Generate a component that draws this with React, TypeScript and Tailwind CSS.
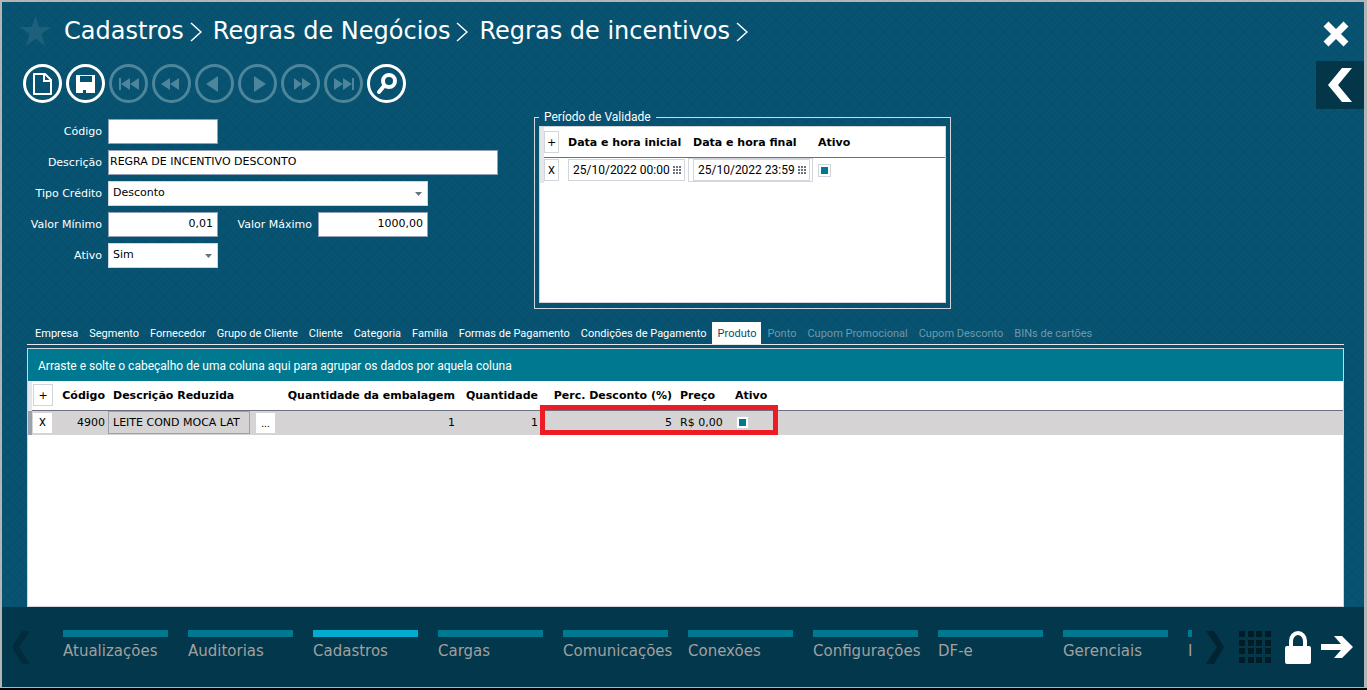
import { useState } from "react";
import type { ReactNode } from "react";

const verdana = "font-['DejaVu_Sans',Verdana,sans-serif]";
const segoe = "font-['Roboto','Segoe_UI',sans-serif]";

const crumbs = ["Cadastros", "Regras de Negócios", "Regras de incentivos"];

const tabs = [
  { label: "Empresa" },
  { label: "Segmento" },
  { label: "Fornecedor" },
  { label: "Grupo de Cliente" },
  { label: "Cliente" },
  { label: "Categoria" },
  { label: "Família" },
  { label: "Formas de Pagamento" },
  { label: "Condições de Pagamento" },
  { label: "Produto" },
  { label: "Ponto", disabled: true },
  { label: "Cupom Promocional", disabled: true },
  { label: "Cupom Desconto", disabled: true },
  { label: "BINs de cartões", disabled: true },
];

const modules = [
  "Atualizações",
  "Auditorias",
  "Cadastros",
  "Cargas",
  "Comunicações",
  "Conexões",
  "Configurações",
  "DF-e",
  "Gerenciais",
  "I",
];

const toolbar: { name: string; enabled?: boolean; icon: ReactNode }[] = [
  {
    name: "Novo",
    enabled: true,
    icon: (
      <>
        <path d="M11 10h11l6 6v14H11z" fill="none" stroke="currentColor" strokeWidth="2" strokeLinejoin="round" />
        <path d="M21 10v7h7" fill="none" stroke="currentColor" strokeWidth="2" />
      </>
    ),
  },
  {
    name: "Salvar",
    enabled: true,
    icon: <path fillRule="evenodd" d="M10 11h19v18H10zM14 12v6h12v-6zM17 26h3v3h-3z" />,
  },
  { name: "Primeiro", icon: <path d="M10 14h2v12h-2zM21 14v12l-9-6zM30 14v12l-9-6z" /> },
  { name: "Voltar página", icon: <path d="M18 14v12l-9-6zM27 14v12l-9-6z" /> },
  { name: "Anterior", icon: <path d="M23 12v16l-12-8z" /> },
  { name: "Próximo", icon: <path d="M16 12v16l12-8z" /> },
  { name: "Avançar página", icon: <path d="M13 14v12l8-6zM21 14v12l9-6z" /> },
  { name: "Último", icon: <path d="M10 14v12l9-6zM19 14v12l9-6zM28 14h2v12h-2z" /> },
  {
    name: "Pesquisar",
    enabled: true,
    icon: (
      <>
        <circle cx="22" cy="17" r="6" fill="none" stroke="currentColor" strokeWidth="4" />
        <path d="M17 22l-5 6" stroke="currentColor" strokeWidth="4" strokeLinecap="round" />
      </>
    ),
  },
];

function TextField({ id, label, value, className = "" }: { id: string; label: string; value: string; className?: string }) {
  return (
    <>
      <label htmlFor={id} className="w-24 shrink-0 pt-0.5 pr-1.5 text-right text-white">
        {label}
      </label>
      <input id={id} defaultValue={value} className={`h-[25px] border border-slate-400 bg-white pb-0.5 text-black ${className}`} />
    </>
  );
}

function SelectField({ id, label, value, className = "" }: { id: string; label: string; value: string; className?: string }) {
  return (
    <>
      <label htmlFor={id} className="w-24 shrink-0 pt-0.5 pr-1.5 text-right text-white">
        {label}
      </label>
      <div className={`relative ${className}`}>
        <select id={id} className="block h-[25px] w-full appearance-none border border-gray-300 bg-white pl-1 text-black">
          <option>{value}</option>
        </select>
        <svg viewBox="0 0 7 4" className="pointer-events-none absolute top-[11px] right-1.5 h-1 w-[7px] fill-gray-500">
          <path d="M0 0h7L3.500 4z" />
        </svg>
      </div>
    </>
  );
}

function DateCell({ label, value }: { label: string; value: string }) {
  return (
    <div className={`flex h-[22px] w-[117px] items-center border border-gray-300 bg-white pr-[3px] pl-1 ${segoe}`}>
      <input aria-label={label} defaultValue={value} className="w-full min-w-0 text-xs" />
      <svg viewBox="0 0 8 8" className="size-2 shrink-0 fill-gray-500">
        <path d="M0 0h2v2H0zM3 0h2v2H3zM6 0h2v2H6zM0 3h2v2H0zM3 3h2v2H3zM6 3h2v2H6zM0 6h2v2H0zM3 6h2v2H3zM6 6h2v2H6z" />
      </svg>
    </div>
  );
}

function Tick({ label }: { label: string }) {
  return (
    <input
      type="checkbox"
      aria-label={label}
      defaultChecked
      className="block size-[13px] appearance-none border border-gray-300 bg-white p-0.5 checked:bg-[linear-gradient(#00788f,#00788f)] checked:bg-origin-content checked:bg-no-repeat"
    />
  );
}

const smallButton = "block border border-gray-300 bg-white pt-0.5 text-center font-normal text-black";

export default function App() {
  const [tab, setTab] = useState("Produto");
  const [module, setModule] = useState("Cadastros");

  return (
    <div className={`flex min-h-screen flex-col overflow-hidden bg-black pb-0.5 text-[11px] ${verdana}`}>
      <div className="relative flex flex-1 flex-col border-2 border-r-[3px] border-b border-[#b5b5b5] bg-[#075371]">
        <svg className="pointer-events-none absolute inset-0 h-full w-full" aria-hidden="true">
          <defs>
            <pattern id="weave" width="12" height="12" patternUnits="userSpaceOnUse">
              <path d="M0 0l12 12M12 0L0 12" stroke="#04465f" strokeOpacity="0.45" />
            </pattern>
          </defs>
          <rect width="100%" height="100%" fill="url(#weave)" />
        </svg>

        <header className="relative flex items-start justify-between">
          <div className="pl-[18px]">
            <div className="flex h-[58px] items-center">
              <button aria-label="Favorito" className="mr-[13px]">
                <svg viewBox="0 0 31 30" className="h-[30px] w-[31px] fill-[#1c607c]">
                  <path d="M15.500 0l3.700 11H31l-9.500 7 3.600 12-9.600-7.200L5.900 30l3.600-12L0 11h11.800z" />
                </svg>
              </button>
              <nav className="flex items-center gap-[11px] text-2xl text-white">
                {crumbs.map((c) => (
                  <a key={c} href="#" className="flex items-center gap-1.5">
                    {c}
                    <svg viewBox="0 0 12 20" className="mt-0.5 h-5 w-3 fill-none stroke-white">
                      <path d="M1 1l10 9L1 19" strokeWidth="1.500" />
                    </svg>
                  </a>
                ))}
              </nav>
            </div>
            <div className="flex gap-1 pt-1 pl-[3px]">
              {toolbar.map((t) => (
                <button key={t.name} aria-label={t.name} disabled={!t.enabled} className="text-white disabled:text-[#4d859b]">
                  <svg viewBox="0 0 39 39" className="size-[39px] fill-current">
                    <circle cx="19.500" cy="19.500" r="18" fill="none" stroke="currentColor" strokeWidth="3" />
                    {t.icon}
                  </svg>
                </button>
              ))}
            </div>
          </div>
          <div className="flex flex-col items-end">
            <button aria-label="Fechar" className="mt-[19px] mr-[15px]">
              <svg viewBox="0 0 26 26" className="size-[26px] stroke-white">
                <path d="M3 3l20 20M23 3L3 23" strokeWidth="7" />
              </svg>
            </button>
            <button aria-label="Abrir painel" className="mt-[14px] flex h-12 w-12 items-center justify-center bg-[#04364a]">
              <svg viewBox="0 0 24 34" className="h-[34px] w-6 fill-white">
                <path d="M14 0h10L10 17l14 17H14L0 17z" />
              </svg>
            </button>
          </div>
        </header>

        <div className="relative flex pl-2.5">
          <form className="flex w-[522px] shrink-0 flex-col gap-1.5 pt-2.5">
            <div className="flex items-center">
              <TextField id="codigo" label="Código" value="" className="w-[110px] px-1" />
            </div>
            <div className="flex items-center">
              <TextField id="descricao" label="Descrição" value="REGRA DE INCENTIVO DESCONTO" className="w-[390px] px-px" />
            </div>
            <div className="flex items-center">
              <SelectField id="tipo" label="Tipo Crédito" value="Desconto" className="w-80" />
            </div>
            <div className="flex items-center">
              <TextField id="minimo" label="Valor Mínimo" value="0,01" className="w-[110px] px-1 text-right" />
              <div className="w-1" />
              <TextField id="maximo" label="Valor Máximo" value="1000,00" className="w-[110px] px-1 text-right" />
            </div>
            <div className="flex items-center">
              <SelectField id="ativo" label="Ativo" value="Sim" className="w-[110px]" />
            </div>
          </form>

          <fieldset className={`h-[200px] w-[417px] border border-gray-300 px-1 pb-[5px] ${segoe}`}>
            <legend className="px-[5px] text-xs leading-[17px] text-white">Período de Validade</legend>
            <div className={`h-full border border-gray-300 bg-white ${verdana}`}>
              <table className="w-full table-fixed border-l border-gray-500 text-left text-black">
                <thead>
                  <tr className="h-[30px] border-b border-gray-500">
                    <th className="w-[26px] border-l-4 border-gray-200">
                      <button aria-label="Adicionar período" className={`${smallButton} h-[22px] w-[15px]`}>+</button>
                    </th>
                    <th className="w-[125px] pt-0.5">Data e hora inicial</th>
                    <th className="w-[125px] pt-0.5">Data e hora final</th>
                    <th className="pt-0.5">Ativo</th>
                  </tr>
                </thead>
                <tbody>
                  <tr className="h-[26px]">
                    <td className="border-l-4 border-gray-200">
                      <button aria-label="Remover período" className={`${smallButton} h-[22px] w-[15px] ${segoe}`}>X</button>
                    </td>
                    <td><DateCell label="Data e hora inicial" value="25/10/2022 00:00" /></td>
                    <td>
                      <div className="-ml-[5px] w-[125px] border border-gray-300 pl-1">
                        <DateCell label="Data e hora final" value="25/10/2022 23:59" />
                      </div>
                    </td>
                    <td><Tick label="Período ativo" /></td>
                  </tr>
                </tbody>
              </table>
            </div>
          </fieldset>
        </div>

        <div className="relative mr-5 ml-[25px] flex flex-1 flex-col pt-[13px]">
          <div role="tablist" className={`flex h-[23px] border-b border-gray-200 pl-0.5 ${segoe}`}>
            {tabs.map((t) => (
              <button
                key={t.label}
                role="tab"
                aria-selected={tab === t.label}
                disabled={t.disabled}
                onClick={() => setTab(t.label)}
                className="pt-0.5 pr-[5px] pl-1.5 text-[11px] whitespace-nowrap text-white disabled:text-[#7097a8] aria-selected:bg-white aria-selected:text-[#06506e]"
              >
                {t.label}
              </button>
            ))}
          </div>

          <section className="mt-[3px] flex-1 border border-gray-300 bg-white">
            <p className={`flex h-8 items-center bg-[#00788f] pt-0.5 pl-2.5 text-xs text-white ${segoe}`}>
              Arraste e solte o cabeçalho de uma coluna aqui para agrupar os dados por aquela coluna
            </p>
            <div className="relative">
              <table className="w-full table-fixed text-left text-black">
                <thead>
                  <tr className="h-[29px] border-b border-gray-500">
                    <th className="w-[30px] border-l-4 border-gray-200">
                      <button aria-label="Adicionar produto" className={`${smallButton} ml-px h-[22px] w-5`}>+</button>
                    </th>
                    <th className="w-[45px] pt-0.5 text-right whitespace-nowrap">Código</th>
                    <th className="w-[172px] pt-0.5 pl-2">Descrição Reduzida</th>
                    <th className="w-[178px] pt-0.5 text-right whitespace-nowrap">Quantidade da embalagem</th>
                    <th className="w-[83px] pt-0.5 text-right whitespace-nowrap">Quantidade</th>
                    <th className="w-[134px] pt-0.5 text-right whitespace-nowrap">Perc. Desconto (%)</th>
                    <th className="w-[63px] pt-0.5 pl-2">Preço</th>
                    <th className="pt-0.5">Ativo</th>
                  </tr>
                </thead>
                <tbody>
                  <tr className="h-[25px] bg-[#d5d3d3]">
                    <td className="border-l-4 border-gray-400">
                      <button aria-label="Remover produto" className={`ml-px block h-5 w-[19px] bg-white ${segoe}`}>X</button>
                    </td>
                    <td className="text-right">4900</td>
                    <td className="pl-[3px]">
                      <div className="flex items-center gap-1.5">
                        <input aria-label="Descrição Reduzida" defaultValue="LEITE COND MOCA LAT" className="h-[23px] w-[142px] shrink-0 border border-gray-400 px-1" />
                        <button aria-label="Selecionar produto" className={`h-5 w-[19px] shrink-0 bg-white pt-0.5 ${segoe}`}>...</button>
                      </div>
                    </td>
                    <td className="text-right">1</td>
                    <td className="text-right">1</td>
                    <td className="text-right">5</td>
                    <td className="pl-2 whitespace-nowrap">R$ 0,00</td>
                    <td className="pl-px"><Tick label="Produto ativo" /></td>
                  </tr>
                </tbody>
              </table>
              <div className="pointer-events-none absolute top-6 left-[512px] h-[30px] w-[238px] border-5 border-[#ed1c24]" />
            </div>
          </section>
        </div>

        <footer className="relative flex h-20 items-center bg-[#03374b]">
          <button aria-label="Módulos anteriores" className="mr-[33px] ml-2.5">
            <svg viewBox="0 0 18 33" className="h-[33px] w-[18px] fill-[#022c3d]">
              <path d="M10 0h8L7 16l11 17h-8L0 16z" />
            </svg>
          </button>
          <nav className="flex min-w-0 flex-1 gap-5 overflow-hidden">
            {modules.map((m) => (
              <button
                key={m}
                onClick={() => setModule(m)}
                aria-pressed={module === m}
                className="w-[105px] shrink-0 border-t-[7px] border-[#00788f] pt-[3px] pb-px text-left text-[15px] whitespace-nowrap text-[#a0a0a0] aria-pressed:border-[#00acd0]"
              >
                {m}
              </button>
            ))}
          </nav>
          <div className="flex items-center pr-[11px] pl-3.5">
            <button aria-label="Próximos módulos">
              <svg viewBox="0 0 18 33" className="h-[33px] w-[18px] fill-[#022430]">
                <path d="M8 0H0l11 16L0 33h8l10-17z" />
              </svg>
            </button>
            <button aria-label="Todos os módulos" className="ml-[15px]">
              <svg viewBox="0 0 33 32" className="h-8 w-[33px] fill-[#021b25]">
                <path d="M0 0h6v6H0zM9 0h6v6H9zM17 0h6v6h-6zM26 0h6v6h-6zM0 9h6v6H0zM9 9h6v6H9zM17 9h6v6h-6zM26 9h6v6h-6zM0 17h6v6H0zM9 17h6v6H9zM17 17h6v6h-6zM26 17h6v6h-6zM0 26h6v6H0zM9 26h6v6H9zM17 26h6v6h-6zM26 26h6v6h-6z" />
              </svg>
            </button>
            <button aria-label="Bloquear" className="ml-[13px]">
              <svg viewBox="0 0 26 33" className="h-[33px] w-[26px] fill-white">
                <rect y="15" width="26" height="18" rx="2" />
                <path d="M6 16v-6a7 8 0 0 1 14 0v6" fill="none" stroke="white" strokeWidth="4" />
              </svg>
            </button>
            <button aria-label="Sair" className="ml-2.5">
              <svg viewBox="0 0 32 22" className="h-[22px] w-8 fill-white">
                <path d="M0 8h20L13 0h8l11 11-11 11h-8l7-8H0z" />
              </svg>
            </button>
          </div>
        </footer>
      </div>
    </div>
  );
}
